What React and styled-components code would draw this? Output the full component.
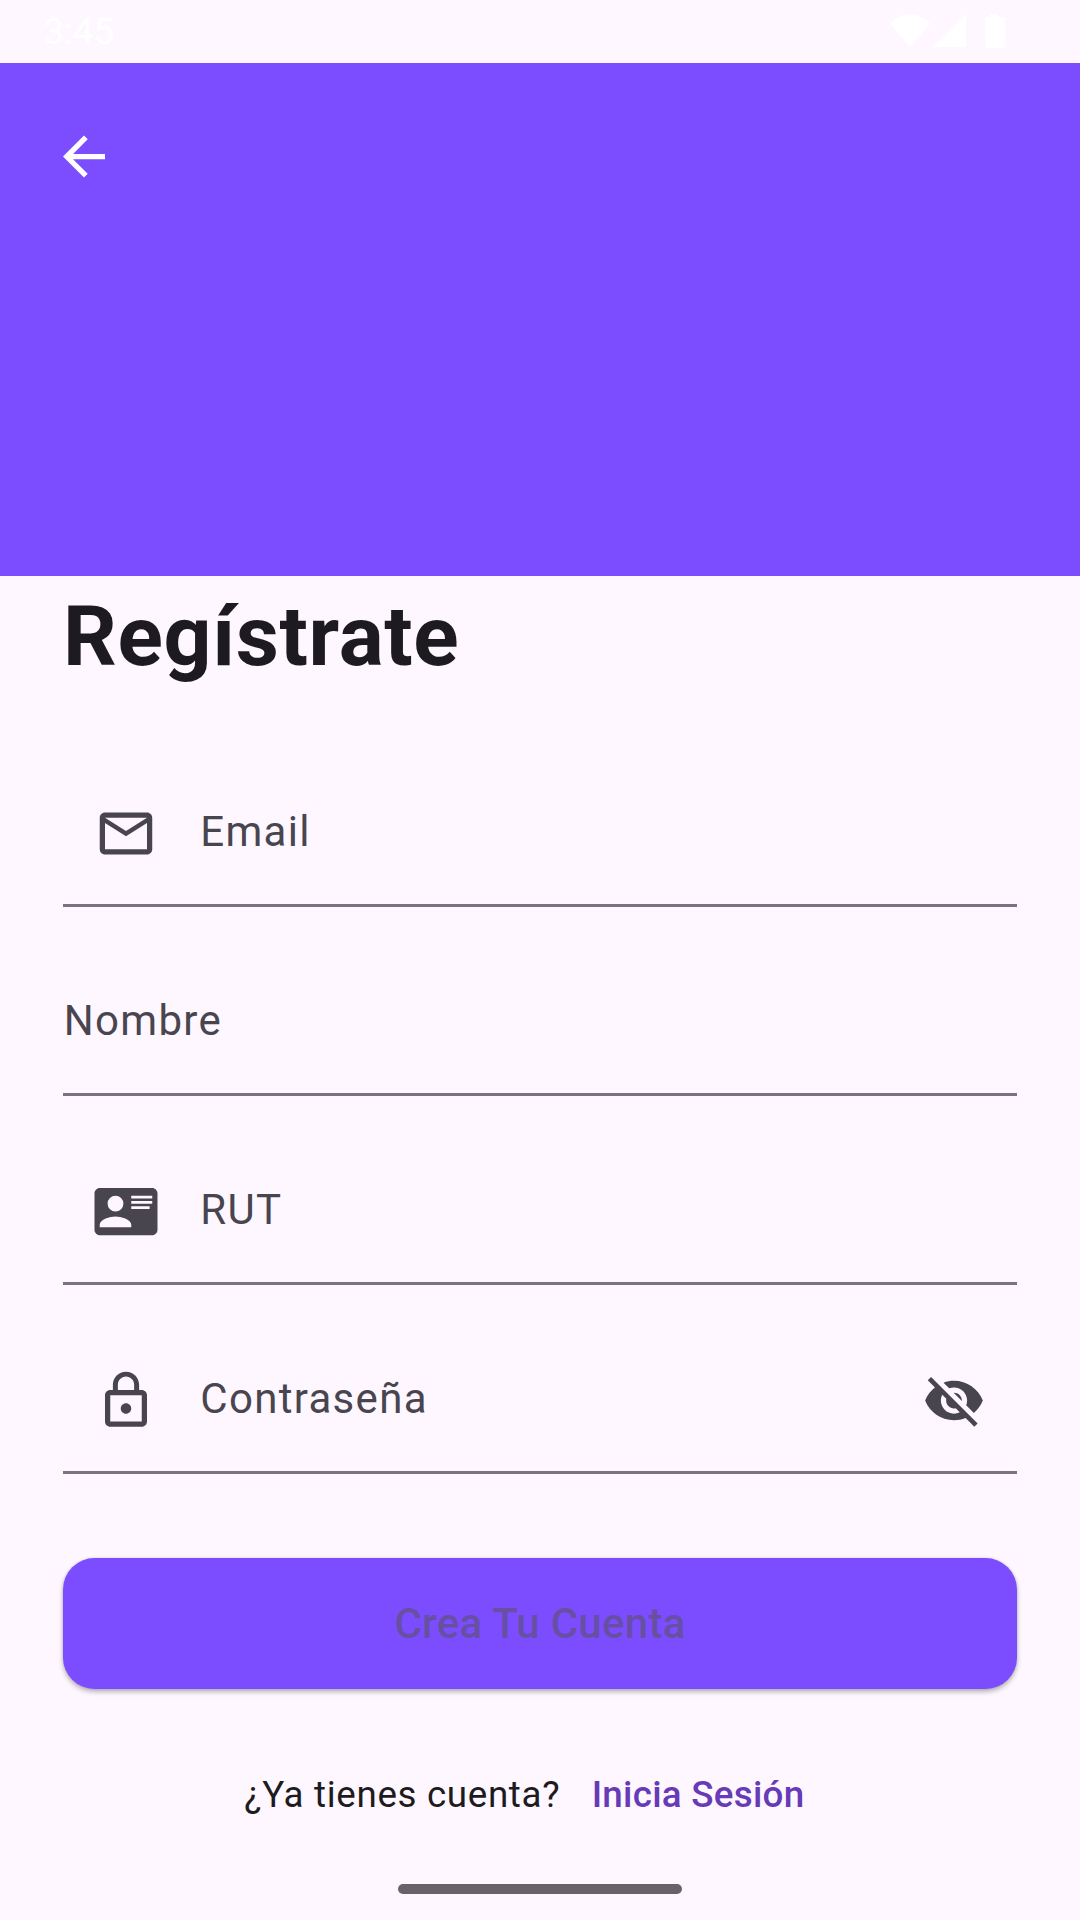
import React from "react";
import styled, { createGlobalStyle } from "styled-components";

const GlobalStyle = createGlobalStyle`
  *, *::before, *::after { box-sizing: border-box; }
  body { margin: 0; background: #fef7ff; }
`;

const Screen = styled.main`
  display: flex;
  flex-direction: column;
  width: 1080px;
  height: 1920px;
  overflow: hidden;
  background: #fef7ff;
  color: #1d1b20;
  font-family: Roboto, "Noto Sans", sans-serif;
`;

const StatusBar = styled.div`
  display: flex;
  justify-content: space-between;
  flex: none;
  height: 63px;
  padding: 9px 74px 0 43px;
  color: #fff;
`;

const Clock = styled.span`
  font-size: 37px;
  line-height: 46px;
`;

const StatusIcons = styled.svg`
  width: 118px;
  height: 44px;
  fill: currentColor;
`;

const Banner = styled.header`
  flex: none;
  height: 513px;
  padding: 62px 52px;
  background: #7c4dff;
`;

const IconButton = styled.button`
  display: block;
  padding: 0;
  border: 0;
  background: none;
  color: ${(p) => p.$color};
`;

const Glyph = styled.svg`
  display: block;
  flex: none;
  width: 63px;
  height: 63px;
  overflow: visible;
  fill: currentColor;
`;

const Content = styled.section`
  display: flex;
  flex-direction: column;
  padding: 11px 63px 0;
`;

const Title = styled.h1`
  margin: 0 0 32px;
  font-size: 84px;
  font-weight: 700;
  line-height: 99px;
  letter-spacing: 0.656px;
`;

const Field = styled.div`
  display: flex;
  align-items: flex-start;
  height: 189px;
  padding: ${(p) => (p.$icon ? "84px 32px 0 31px" : "84px 0 0")};
  border-bottom: 3px solid #79747e;
  color: #49454f;
`;

const Label = styled.label`
  flex: 1;
  padding-left: ${(p) => (p.$icon ? "43.25px" : "0.75px")};
  margin-top: 5px;
  font-size: 42px;
  line-height: 50px;
  letter-spacing: 1.3125px;
`;

const Submit = styled.button`
  height: 131px;
  margin-top: 84px;
  padding: 0;
  border: 0;
  border-radius: 31.5px;
  background: #7c4dff;
  box-shadow: 0 3px 5px rgba(0, 0, 0, 0.27), 0 0 3px rgba(0, 0, 0, 0.12);
  color: #6750a4;
  font: 500 42px/50px Roboto, "Noto Sans", sans-serif;
  letter-spacing: 0.2625px;
`;

const Footer = styled.div`
  display: flex;
  justify-content: center;
  gap: 31.5px;
  margin-top: 84px;
  padding-right: 31.5px;
  font-size: 36.75px;
  line-height: 44px;
  letter-spacing: 0.656px;
`;

const Link = styled.a`
  color: #673ab7;
  font-weight: 500;
  letter-spacing: 0.2625px;
`;

const HomeBar = styled.div`
  flex: none;
  align-self: center;
  width: 284px;
  height: 10px;
  margin: auto 0 26px;
  border-radius: 5px;
  background: #68636a;
`;

const icons = {
  back: "M20 11H7.83l5.59-5.59L12 4l-8 8 8 8 1.41-1.41L7.83 13H20v-2z",
  mail: "M22 6c0-1.1-.9-2-2-2H4c-1.1 0-2 .9-2 2v12c0 1.1.9 2 2 2h16c1.1 0 2-.9 2-2V6zm-2 0l-8 5-8-5h16zm0 12H4V8l8 5 8-5v10z",
  card: "M2,3H22C23.05,3 24,3.95 24,5V19C24,20.05 23.05,21 22,21H2C0.95,21 0,20.05 0,19V5C0,3.95 0.95,3 2,3M14,6V7H22V6H14M14,8V9H21.5L22,9V8H14M14,10V11H21V10H14M8,13.91C6,13.91 2,15 2,17V18H14V17C14,15 10,13.91 8,13.91M8,6A3,3 0 0,0 5,9A3,3 0 0,0 8,12A3,3 0 0,0 11,9A3,3 0 0,0 8,6Z",
  lock: "M12 17c1.1 0 2-.9 2-2s-.9-2-2-2-2 .9-2 2 .9 2 2 2zm6-9h-1V6c0-2.76-2.24-5-5-5S7 3.24 7 6v2H6c-1.1 0-2 .9-2 2v10c0 1.1.9 2 2 2h12c1.1 0 2-.9 2-2V10c0-1.1-.9-2-2-2zM8.9 6c0-1.71 1.39-3.1 3.1-3.1s3.1 1.39 3.1 3.1v2H8.9V6zM18 20H6V10h12v10z",
  eyeOff: "M12 7c2.76 0 5 2.24 5 5 0 .65-.13 1.26-.36 1.83l2.92 2.92c1.51-1.26 2.7-2.89 3.43-4.75-1.73-4.39-6-7.5-11-7.5-1.4 0-2.74.25-3.98.7l2.16 2.16C10.74 7.13 11.35 7 12 7zM2 4.27l2.28 2.28.46.46C3.08 8.3 1.78 10.02 1 12c1.73 4.39 6 7.5 11 7.5 1.55 0 3.03-.3 4.38-.84l.42.42L19.73 22 21 20.73 3.27 3 2 4.27zM7.53 9.8l1.55 1.55c-.05.21-.08.43-.08.65 0 1.66 1.34 3 3 3 .22 0 .44-.03.65-.08l1.55 1.55c-.67.33-1.41.53-2.2.53-2.76 0-5-2.24-5-5 0-.79.2-1.53.53-2.2zm4.31-.78l3.15 3.15.02-.16c0-1.66-1.34-3-3-3l-.17.01z",
};

const Icon = ({ name }) => (
  <Glyph viewBox="-0.19 0 24 24" aria-hidden="true">
    <path d={icons[name]} />
  </Glyph>
);

const fields = [
  { label: "Email", icon: "mail" },
  { label: "Nombre" },
  { label: "RUT", icon: "card" },
  { label: "Contraseña", icon: "lock", secret: true },
];

export default function App() {
  return (
    <>
      <GlobalStyle />
      <Screen>
        <StatusBar>
          <Clock>3:45</Clock>
          <StatusIcons viewBox="0 0 118 44">
            <path d="M2 14.5C13 2.5 31 2.5 42 14.5L22 38Z" />
            <path d="M45 38L78 5V38Z" />
            <path d="M102 5h8v3h4q3 0 3 3v25q0 3-3 3h-14q-3 0-3-3v-25q0-3 3-3h2z" />
          </StatusIcons>
        </StatusBar>
        <Banner>
          <IconButton $color="#fff" aria-label="Volver">
            <Icon name="back" />
          </IconButton>
        </Banner>
        <Content>
          <Title>Regístrate</Title>
          {fields.map(({ label, icon, secret }) => (
            <Field key={label} $icon={icon}>
              {icon && <Icon name={icon} />}
              <Label $icon={icon}>{label}</Label>
              {secret && (
                <IconButton $color="#49454f" aria-label="Mostrar">
                  <Icon name="eyeOff" />
                </IconButton>
              )}
            </Field>
          ))}
          <Submit>Crea Tu Cuenta</Submit>
          <Footer>
            <span>¿Ya tienes cuenta?</span>
            <Link>Inicia Sesión</Link>
          </Footer>
        </Content>
        <HomeBar />
      </Screen>
    </>
  );
}
